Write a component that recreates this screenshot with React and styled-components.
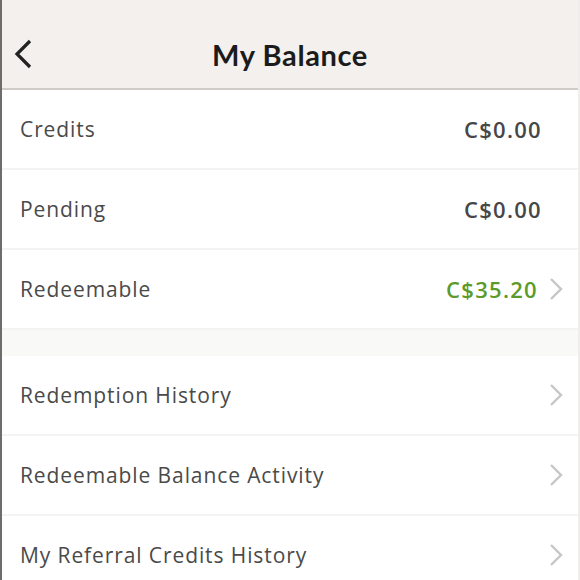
import React from "react"
import styled, { createGlobalStyle } from "styled-components"

const GlobalStyle = createGlobalStyle`
  html, body {
    margin: 0;
    padding: 0;
    background: #f7f6f4;
  }
  body {
    font-family: "Open Sans", "Liberation Sans", sans-serif;
  }
`

const Screen = styled.div`
  width: 580px;
  height: 580px;
  overflow: hidden;
  box-sizing: border-box;
  border-left: 2px solid #6f6d6b;
  border-right: 2px solid #efeeec;
  background: #f9f9f8;
`

const Header = styled.header`
  height: 90px;
  box-sizing: border-box;
  padding-top: 20px;
  background: #f3f0ed;
  border-bottom: 2px solid #cfcbc7;
  display: grid;
  grid-template-columns: 60px 1fr 60px;
  align-items: center;
`

const BackButton = styled.button`
  border: 0;
  background: none;
  padding: 0 0 0 10px;
  display: flex;
  align-items: center;
  height: 100%;
  cursor: pointer;
`

const Title = styled.h1`
  margin: 0;
  text-align: center;
  font-family: "Lato", "Open Sans", sans-serif;
  font-weight: 700;
  font-size: 29px;
  color: #1b1b1b;
  letter-spacing: 0.6px;
`

const Section = styled.section`
  background: #ffffff;
  margin-bottom: ${(p) => (p.$gap ? "26px" : "0")};
`

const Row = styled.div`
  height: 78px;
  display: flex;
  align-items: center;
  padding: 0 14px 0 18px;
  border-bottom: 2px solid #f3f3f1;
`

const Label = styled.span`
  flex: 1;
  font-size: 21px;
  color: #4a4a4a;
  letter-spacing: 0.9px;
`

const Amount = styled.span`
  font-size: 22px;
  font-weight: 600;
  color: ${(p) => (p.$green ? "#5b9a2b" : "#474747")};
  margin-right: ${(p) => (p.$arrow ? "10px" : "22px")};
  letter-spacing: 1.3px;
`

const Chevron = () => (
  <svg width="16" height="24" viewBox="0 0 16 24">
    <path d="M3 2 L13 12 L3 22" fill="none" stroke="#c6c6c6" strokeWidth="2.4" />
  </svg>
)

const BackIcon = () => (
  <svg width="24" height="32" viewBox="0 0 24 32">
    <path d="M18 3 L5 16 L18 29" fill="none" stroke="#222" strokeWidth="3.2" />
  </svg>
)

export default function App() {
  return (
    <>
      <GlobalStyle />
      <Screen>
        <Header>
          <BackButton aria-label="Back">
            <BackIcon />
          </BackButton>
          <Title>My Balance</Title>
          <span />
        </Header>
        <Section $gap>
          <Row>
            <Label>Credits</Label>
            <Amount>C$0.00</Amount>
          </Row>
          <Row>
            <Label>Pending</Label>
            <Amount>C$0.00</Amount>
          </Row>
          <Row>
            <Label>Redeemable</Label>
            <Amount $green $arrow>C$35.20</Amount>
            <Chevron />
          </Row>
        </Section>
        <Section>
          <Row>
            <Label>Redemption History</Label>
            <Chevron />
          </Row>
          <Row>
            <Label>Redeemable Balance Activity</Label>
            <Chevron />
          </Row>
          <Row>
            <Label>My Referral Credits History</Label>
            <Chevron />
          </Row>
        </Section>
      </Screen>
    </>
  )
}
